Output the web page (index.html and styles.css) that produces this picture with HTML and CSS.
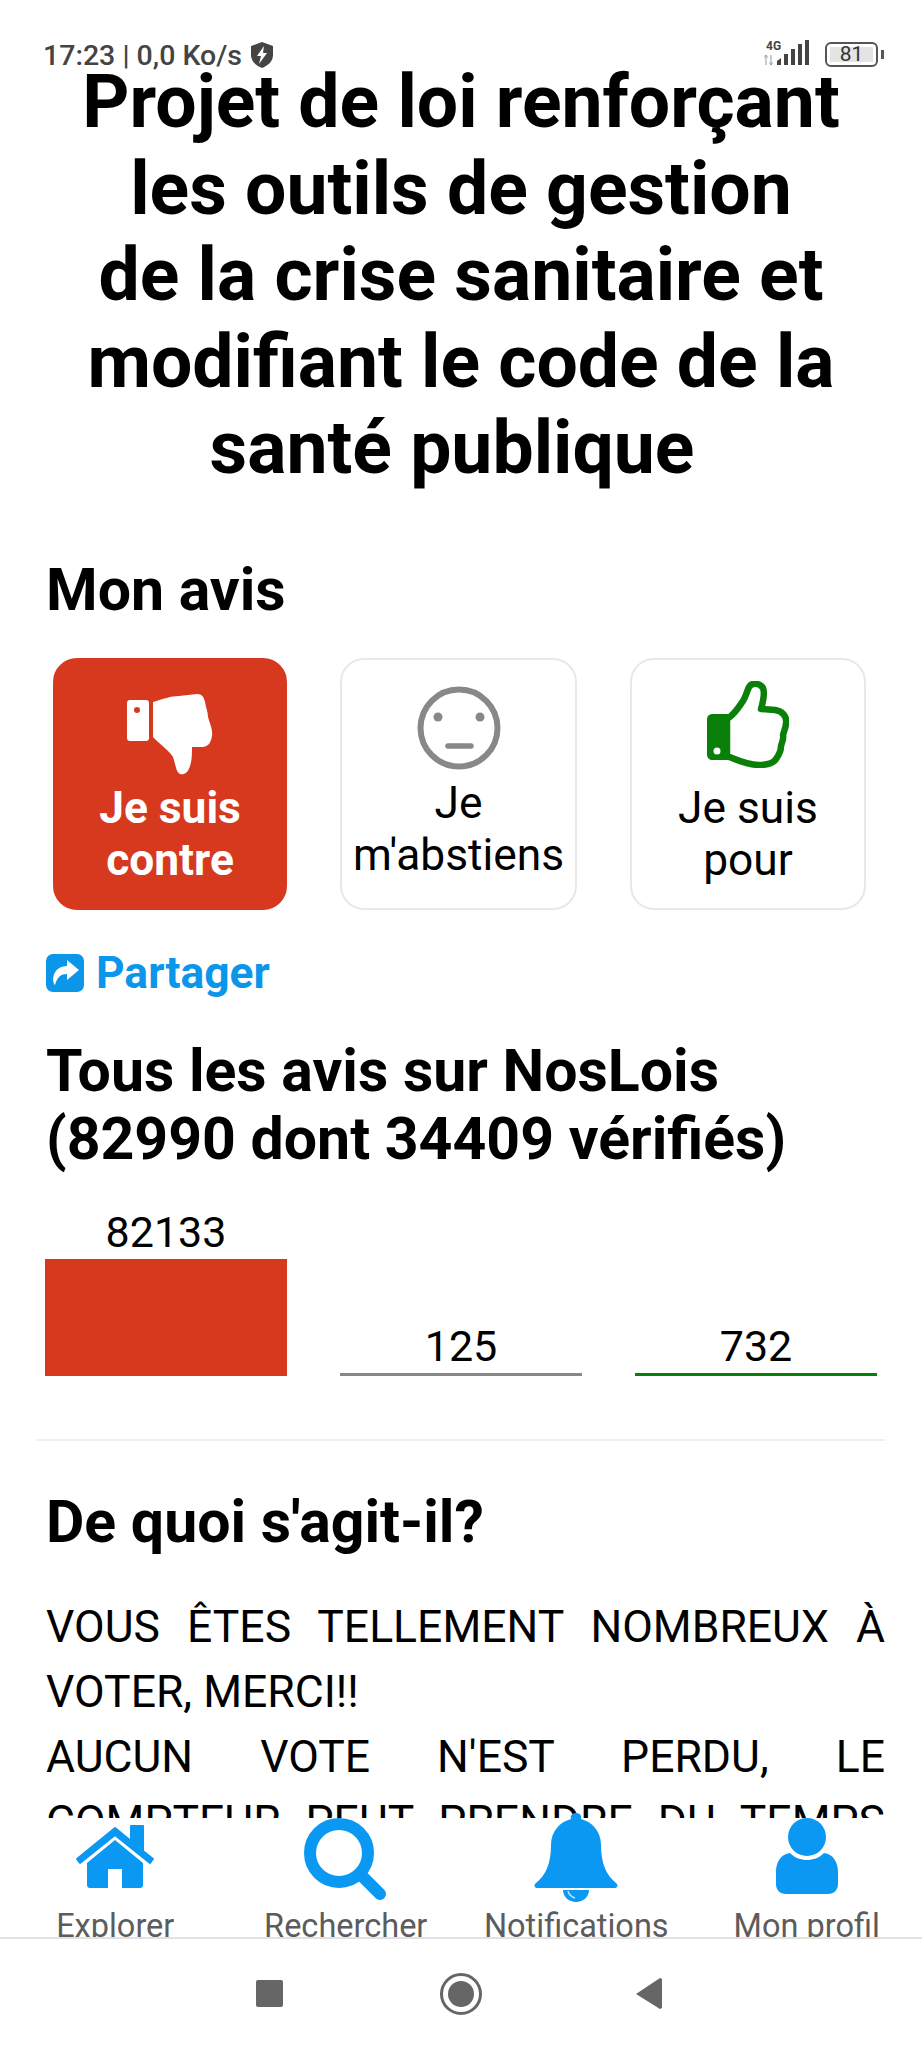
FILE: index.html
```html
<!DOCTYPE html>
<html lang="fr">
<head>
    <title>NosLois</title>
    <meta charset="utf-8">
    <link rel="stylesheet" href="styles.css">
</head>
<body>
    <div class="screen">
        <div class="status-bar">
            <div class="status-left">
                <span>17:23 | 0,0 Ko/s</span>
                <svg class="shield" width="22" height="26" viewBox="0 0 22 26">
                    <path d="M11 0 L22 4 V13 C22 20 16 24 11 26 C6 24 0 20 0 13 V4 Z" fill="#444"/>
                    <path d="M13 4 L6 14 H10 L8 22 L16 11 H12 Z" fill="#fff"/>
                </svg>
            </div>
            <div class="status-right">
                <div class="network">
                    <span class="net-label">4G</span>
                    <svg width="48" height="26" viewBox="0 0 48 26">
                        <path d="M2 15 V25 M0.5 17.5 L2 15 L3.5 17.5 M7 15 V25 M5.5 22.5 L7 25 L8.5 22.5" stroke="#999" stroke-width="1" fill="none"/>
                        <path d="M13 21 L17 18 V25 H13 Z" fill="#444"/>
                        <rect x="20" y="14" width="4" height="11" fill="#444"/>
                        <rect x="27" y="9" width="4" height="16" fill="#444"/>
                        <rect x="34" y="4" width="4" height="21" fill="#444"/>
                        <rect x="41" y="0" width="4" height="25" fill="#444"/>
                    </svg>
                </div>
                <div class="battery"><span class="battery-level">81</span></div>
                <div class="battery-nub"></div>
            </div>
        </div>

        <div class="main">
            <h1 class="title">Projet de loi renforçant<br>les outils de gestion<br>de la crise sanitaire et<br>modifiant le code de la<br><span class="title-end">santé publique</span></h1>

            <h2 class="heading opinion-heading">Mon avis</h2>
            <div class="votes">
                <div class="vote vote-active">
                    <svg class="icon-down" width="86" height="81" viewBox="0 0 86 81">
                        <path d="M3 6 H19 A3 3 0 0 1 22 9 V44 A3 3 0 0 1 19 47 H3 A3 3 0 0 1 0 44 V9 A3 3 0 0 1 3 6 Z M10 13 A3 3 0 1 0 10 19 A3 3 0 1 0 10 13 Z" fill="#fff" fill-rule="evenodd"/>
                        <path d="M26 8 C36 5 44 2 52 2 L70 0 C75 0 77 3 78 8 C79 14 81 18 81 23 C83 30 86 36 85 42 C84 48 82 52 76 53 L65 53 C65 60 65 66 63 72 C61 79 57 81 53 80 C49 78 49 72 46 63 C42 56 32 50 26 43 Z" fill="#fff"/>
                    </svg>
                    <span>Je suis<br>contre</span>
                </div>
                <div class="vote">
                    <svg class="icon-neutral" width="84" height="84" viewBox="0 0 84 84">
                        <circle cx="42" cy="42" r="38.5" fill="none" stroke="#888" stroke-width="6"/>
                        <circle cx="21" cy="31" r="4.5" fill="#888"/>
                        <circle cx="63" cy="31" r="4.5" fill="#888"/>
                        <path d="M31 60 H54" stroke="#888" stroke-width="5.5" stroke-linecap="round"/>
                    </svg>
                    <span>Je<br>m'abstiens</span>
                </div>
                <div class="vote">
                    <svg class="icon-up" width="82" height="87" viewBox="0 0 82 87">
                        <path d="M20 38 C28 33 31 27 36 20 C39 15 40 10 42 6 C45 1 53 2 56 7 C58 12 56 21 54 28 L68 29 C75 30 80 35 79 42 C79 46 77 50 76 54 C77 58 75 61 74 65 C74 70 72 74 69 78 C66 83 60 84 52 84 C40 84 30 79 20 75 Z" fill="#fff" stroke="#0a7f0a" stroke-width="6.5" stroke-linejoin="round"/>
                        <path d="M6 33 H21 V79 H6 C2 79 0 77 0 73 V39 C0 35 2 33 6 33 Z M10 66.5 A3.5 3.5 0 1 0 10 73.5 A3.5 3.5 0 1 0 10 66.5 Z" fill="#0a7f0a" fill-rule="evenodd"/>
                    </svg>
                    <span>Je suis<br>pour</span>
                </div>
            </div>

            <div class="share">
                <svg width="38" height="38" viewBox="0 0 38 38">
                    <rect width="38" height="38" rx="7" fill="#0c96e9"/>
                    <path d="M21 6 L33 16 L21 26 V20 C15 20 11 23 9 31 C5 27 7 12 21 12 Z" fill="#fff"/>
                </svg>
                <span>Partager</span>
            </div>

            <h2 class="heading all-heading">Tous les avis sur NosLois<br>(82990 dont 34409 vérifiés)</h2>

            <div class="chart">
                <div class="chart-col">
                    <span>82133</span>
                    <div class="bar bar-against"></div>
                </div>
                <div class="chart-col">
                    <span>125</span>
                    <div class="bar bar-neutral"></div>
                </div>
                <div class="chart-col">
                    <span>732</span>
                    <div class="bar bar-for"></div>
                </div>
            </div>

            <hr class="divider">

            <h2 class="heading about-heading">De quoi s'agit-il?</h2>
            <p class="body-text">VOUS ÊTES TELLEMENT NOMBREUX À VOTER, MERCI!!</p>
            <p class="body-text body-text-full">AUCUN VOTE N'EST PERDU, LE COMPTEUR PEUT PRENDRE DU TEMPS</p>
        </div>

        <div class="tabbar">
            <div class="tab">
                <div class="tab-icon">
                    <svg class="icon-home" width="80" height="64" viewBox="0 0 80 64">
                        <path d="M2 34 L40 3 L56 16 V1 H68 V26 L78 34 L75 38 L40 10 L5 38 Z" fill="#0a98f2" stroke="#0a98f2" stroke-width="2" stroke-linejoin="round"/>
                        <path d="M40 15 L68 38 V60 C68 62 67 63 65 63 H47 V44 H33 V63 H15 C13 63 12 62 12 60 V38 Z" fill="#0a98f2"/>
                    </svg>
                </div>
                <span class="tab-label">Explorer</span>
            </div>
            <div class="tab">
                <div class="tab-icon">
                    <svg class="icon-search" width="83" height="83" viewBox="0 0 83 83">
                        <circle cx="35" cy="35" r="29" fill="none" stroke="#0a98f2" stroke-width="12"/>
                        <path d="M57 57 L76 76" stroke="#0a98f2" stroke-width="12" stroke-linecap="round"/>
                    </svg>
                </div>
                <span class="tab-label">Rechercher</span>
            </div>
            <div class="tab">
                <div class="tab-icon">
                    <svg class="icon-bell" width="84" height="89" viewBox="0 0 84 89">
                        <path d="M42 0 C46 0 48 3 47 6 C58 9 67 18 67 32 C67 50 72 62 82 70 C85 73 83 75 80 75 H4 C1 75 -1 73 2 70 C12 62 17 50 17 32 C17 18 26 9 37 6 C36 3 38 0 42 0 Z" fill="#0a98f2"/>
                        <path d="M29 77 H55 C55 84 49 89 42 89 C35 89 29 84 29 77 Z" fill="#0a98f2"/>
                        <path d="M34 78 C35 82 38 84 41 85" fill="none" stroke="#bfe6ff" stroke-width="1.5"/>
                    </svg>
                </div>
                <span class="tab-label">Notifications</span>
            </div>
            <div class="tab">
                <div class="tab-icon">
                    <svg class="icon-person" width="64" height="76" viewBox="0 0 64 76">
                        <circle cx="32" cy="19" r="19" fill="#0a98f2"/>
                        <path d="M15 35 C20 40 26 42 32 42 C38 42 44 40 49 35 C58 36 63 44 63 54 V66 C63 72 59 76 53 76 H11 C5 76 1 72 1 66 V54 C1 44 6 36 15 35 Z" fill="#0a98f2"/>
                    </svg>
                </div>
                <span class="tab-label">Mon profil</span>
            </div>
        </div>

        <div class="navbar">
            <div class="nav-square"></div>
            <div class="nav-home"><div class="nav-home-dot"></div></div>
            <svg class="nav-back" width="26" height="31" viewBox="0 0 26 31">
                <path d="M26 1 V30 L24 31 L0 16 L24 0 Z" fill="#666"/>
            </svg>
        </div>
    </div>
</body>
</html>
```

FILE: styles.css
```css
* {
    box-sizing: border-box;
}
html, body {
    margin: 0;
    padding: 0;
    background: white;
}
body {
    font-family: Roboto, "Noto Sans", sans-serif;
    color: #000;
}
.screen {
    position: relative;
    width: 922px;
    height: 2048px;
    display: flex;
    flex-direction: column;
    overflow: hidden;
}

/* status bar sits over the title */
.status-bar {
    position: absolute;
    top: 0;
    left: 0;
    right: 0;
    z-index: 3;
    padding: 0 38px 0 43px;
    display: flex;
    justify-content: space-between;
}
.status-left {
    margin-top: 40px;
    display: flex;
    align-items: center;
    gap: 9px;
    height: 30px;
    font-size: 28.5px;
    font-weight: 500;
    color: #444;
}
.status-right {
    margin-top: 40px;
    display: flex;
    align-items: flex-start;
}
.network {
    position: relative;
    width: 48px;
    height: 27px;
    margin-right: 13px;
}
.network svg {
    display: block;
}
.net-label {
    position: absolute;
    left: 2px;
    top: -1px;
    font-size: 12px;
    font-weight: 700;
    color: #444;
    background: white;
}
.battery {
    width: 53px;
    height: 25px;
    margin-top: 2px;
    padding: 3px;
    border: 2px solid #555;
    border-radius: 6px;
}
.battery-level {
    display: block;
    height: 15px;
    background: #e4e4e4;
    font-size: 21px;
    line-height: 15px;
    text-align: center;
    color: #333;
}
.battery-nub {
    width: 3px;
    height: 9px;
    margin: 10px 0 0 3px;
    background: #555;
}

/* main scroll area */
.main {
    height: 1818px;
    flex: none;
    padding: 59px 37px 0 46px;
    overflow: hidden;
}
.title {
    margin: 0 0 0 -9px;
    font-size: 73.3px;
    font-weight: 700;
    line-height: 86.5px;
    text-align: center;
}
.title-end {
    margin-right: 18px;
}
.heading {
    margin: 0;
    font-size: 59px;
    font-weight: 700;
    line-height: 68px;
}
.opinion-heading {
    margin-top: 64px;
}
.votes {
    margin: 34px 0 0 7px;
    width: 813px;
    display: grid;
    grid-template-columns: 234px 237px 236px;
    column-gap: 53px;
}
.vote {
    height: 252px;
    padding-top: 24px;
    display: flex;
    flex-direction: column;
    align-items: center;
    text-align: center;
    font-size: 44.3px;
    line-height: 52px;
    background: white;
    border: 2px solid #e8e8e8;
    border-radius: 24px;
}
.vote svg {
    display: block;
    flex: none;
}
.vote-active {
    background: #d7391e;
    border-color: #d7391e;
    color: white;
    font-weight: 700;
}
.icon-down {
    margin: 10px 0 7px;
}
.icon-neutral {
    margin: 2px 0 7px;
}
.icon-up {
    margin: -3px 0 14px;
}
.share {
    margin: 44px 0 0 0;
    display: flex;
    align-items: center;
    gap: 12px;
    height: 38px;
    font-size: 44.4px;
    font-weight: 700;
    color: #0c96e9;
}
.share svg {
    flex: none;
}
.all-heading {
    margin-top: 45px;
}
.chart {
    margin-left: -1px;
    width: 832px;
    height: 203px;
    display: grid;
    grid-template-columns: repeat(3, 242px);
    column-gap: 53px;
    align-items: end;
    text-align: center;
    font-size: 43px;
    line-height: 50px;
}
.chart-col span {
    display: block;
    margin-bottom: 2px;
}
.bar-against {
    height: 117px;
    background: #d7391e;
}
.bar-neutral {
    height: 3px;
    background: #888;
}
.bar-for {
    height: 3px;
    background: #0a7f0a;
}
.divider {
    margin: 63px 0 0 -9px;
    height: 2px;
    border: none;
    background: #eee;
}
.about-heading {
    margin-top: 47px;
}
.body-text {
    margin: 0;
    font-size: 44.5px;
    line-height: 65px;
    text-align: justify;
}
.about-heading + .body-text {
    margin-top: 39px;
}
.body-text-full {
    text-align-last: justify;
}

/* bottom tabs, the icons poke a bit over the text */
.tabbar {
    position: relative;
    z-index: 2;
    height: 119px;
    flex: none;
    display: grid;
    grid-template-columns: repeat(4, 1fr);
    background: white;
}
.tab {
    display: flex;
    flex-direction: column;
    align-items: center;
    min-width: 0;
}
.tab-icon {
    margin-top: -5px;
    height: 93px;
    flex: none;
}
.tab-icon svg {
    display: block;
    overflow: visible;
}
.icon-home {
    margin-top: 12px;
}
.icon-search {
    margin-top: 5px;
}
.icon-person {
    margin-top: 5px;
}
.tab-label {
    height: 31px;
    overflow: hidden;
    font-size: 32.5px;
    line-height: 41px;
    color: #5c5c5c;
    white-space: nowrap;
}
.navbar {
    flex: 1;
    border-top: 2px solid #e2e2e2;
    display: flex;
    align-items: center;
    position: relative;
    background: white;
}
.nav-square {
    width: 27px;
    height: 27px;
    margin-left: 256px;
    background: #666;
    border-radius: 2px;
}
.nav-home {
    width: 42px;
    height: 42px;
    margin-left: 157px;
    padding: 5px;
    border: 3px solid #666;
    border-radius: 50%;
}
.nav-home-dot {
    width: 26px;
    height: 26px;
    background: #666;
    border-radius: 50%;
}
.nav-back {
    margin-left: 154px;
}
```
